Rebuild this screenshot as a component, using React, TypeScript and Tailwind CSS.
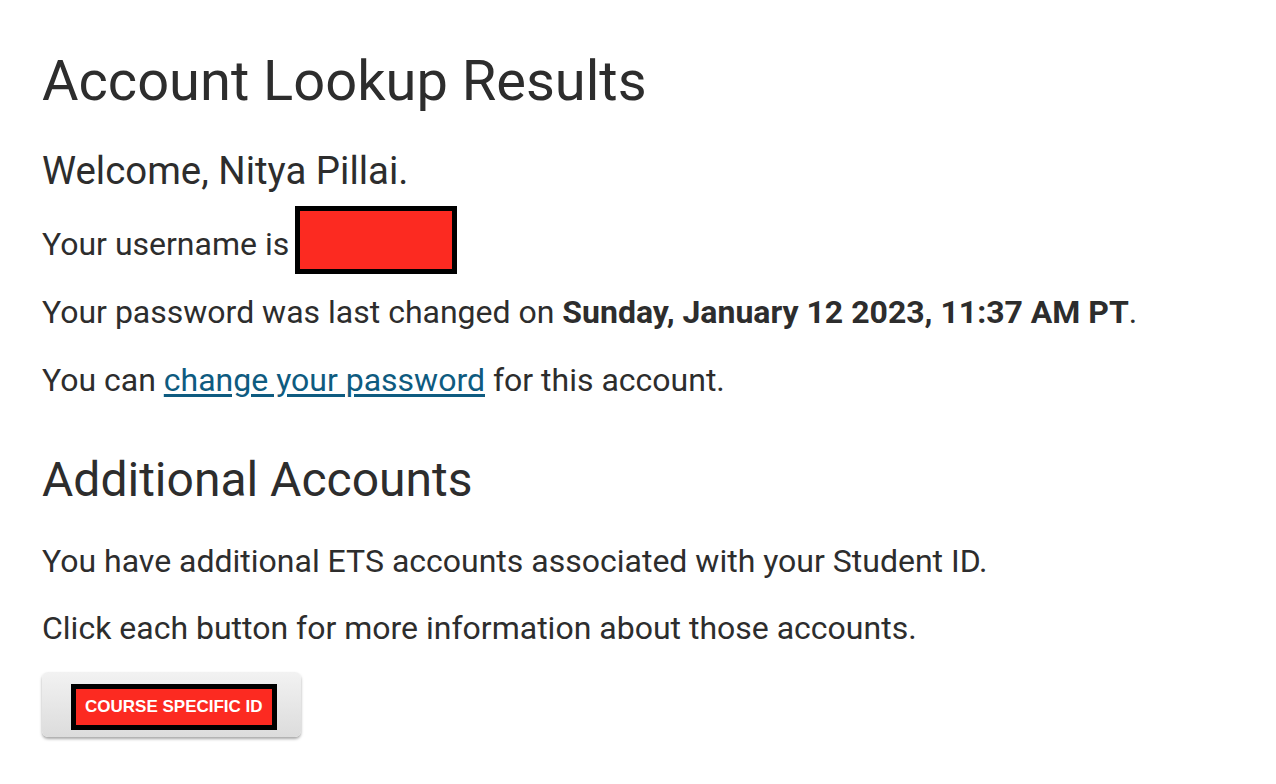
import React from "react";

export default function App() {
  return (
    <div className="min-h-[784px] w-[1276px] bg-white pl-[42px] text-[#2d2d2d]" style={{ fontFamily: "Roboto, 'Noto Sans', sans-serif" }}>
      <h1 className="pt-[53px] text-[56px] leading-[56px] font-normal">Account Lookup Results</h1>
      <div className="mt-[40px] text-[38.4px] leading-[44px]">Welcome, Nitya Pillai.</div>
      <div className="mt-[13px] flex items-start text-[32px] leading-[40px]">
        <span className="mt-[18px]">Your username is</span>
        <span className="ml-[6px] h-[68px] w-[162px] border-[5px] border-black bg-[#fc2a21]" />
      </div>
      <div className="mt-[18px] text-[32px] leading-[40px]">
        Your password was last changed on <b className="font-bold">Sunday, January 12 2023, 11:37 AM PT</b>.
      </div>
      <div className="mt-[28px] text-[32px] leading-[40px]">
        You can <a className="text-[#0e5b80] underline underline-offset-[3px]">change your password</a> for this account.
      </div>
      <h2 className="mt-[52px] text-[48px] leading-[56px] font-normal">Additional Accounts</h2>
      <div className="mt-[33px] text-[32px] leading-[40px]">You have additional ETS accounts associated with your Student ID.</div>
      <div className="mt-[27px] text-[32px] leading-[40px]">Click each button for more information about those accounts.</div>
      <div className="mt-[24px] flex h-[65px] w-[259px] items-center rounded-[6px] bg-gradient-to-b from-[#f2f2f2] to-[#dcdcdc] pl-[29px] shadow-[0_2px_3px_rgba(0,0,0,0.35)]">
        <span className="mt-[5px] border-[5px] border-black bg-[#fc2a21] px-[9px] py-[8px] text-[17px] leading-[20px] font-bold text-white" style={{ fontFamily: "'Liberation Sans', Arial, sans-serif" }}>COURSE SPECIFIC ID</span>
      </div>
    </div>
  );
}
